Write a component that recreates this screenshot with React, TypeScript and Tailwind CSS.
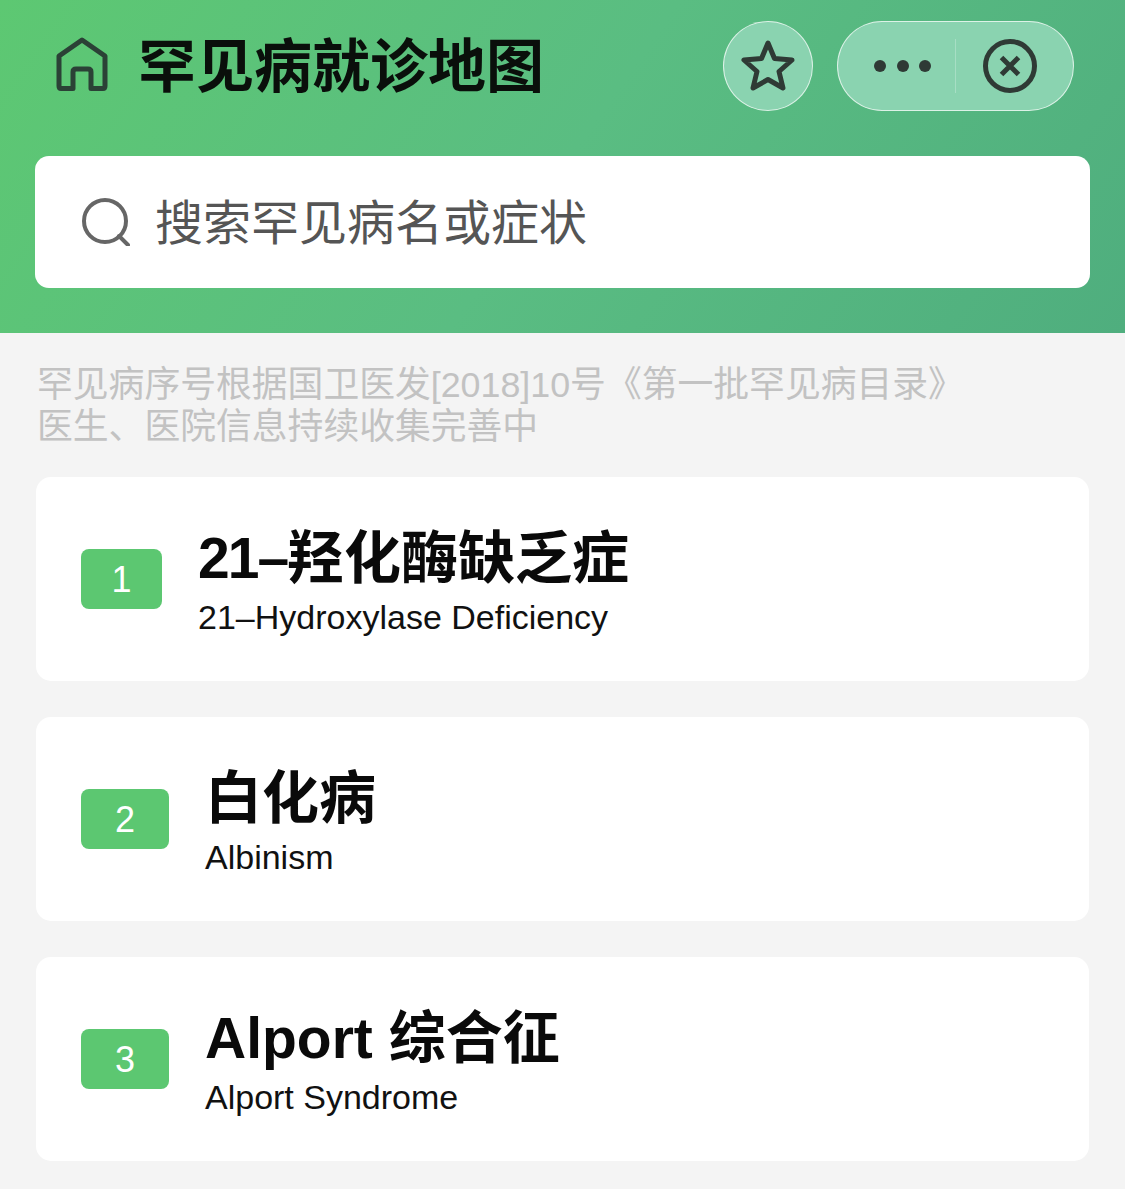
const fontStack = { fontFamily: '"Liberation Sans", "Noto Sans CJK SC", sans-serif' };

const diseases = [
  { no: 1, prefix: "21–", name: "羟化酶缺乏症", en: "21–Hydroxylase Deficiency", badge: "w-[81px]" },
  { no: 2, prefix: "", name: "白化病", en: "Albinism", badge: "w-[88px]" },
  { no: 3, prefix: "", name: "Alport 综合征", en: "Alport Syndrome", badge: "w-[88px]" },
];

function HomeIcon() {
  return (
    <svg width="52" height="54" viewBox="0 0 52 54" fill="none" stroke="#2b4136" strokeWidth="5" strokeLinejoin="round">
      <path d="M26 3 L49 19 V49 Q49 51.5 47 51.5 H35 V35 Q35 32 32 32 H20 Q17 32 17 35 V51.5 H5 Q3 51.5 3 49 V19 Z" />
    </svg>
  );
}

function StarIcon() {
  return (
    <svg width="54" height="52" viewBox="0 0 54 52" fill="none" stroke="#2f3a35" strokeWidth="5" strokeLinejoin="round">
      <path d="M27 3 L33.5 18.5 L51 20 L38 31.5 L42 48 L27 39.5 L12 48 L16 31.5 L3 20 L20.5 18.5 Z" />
    </svg>
  );
}

function CloseIcon() {
  return (
    <svg width="54" height="54" viewBox="0 0 54 54" fill="none" stroke="#2f3a35">
      <circle cx="27" cy="27" r="24.5" strokeWidth="5" />
      <path d="M18.5 18.5 L35.5 35.5 M35.5 18.5 L18.5 35.5" strokeWidth="5" />
    </svg>
  );
}

function SearchIcon() {
  return (
    <svg width="48" height="48" viewBox="0 0 48 48" fill="none" stroke="#666666" strokeWidth="4">
      <circle cx="23" cy="23" r="21" />
      <path d="M37 38 L46 47" strokeLinecap="round" />
    </svg>
  );
}

export default function App() {
  return (
    <div className="w-[1125px] h-[1189px] overflow-hidden bg-[#f4f4f4]" style={fontStack}>
      <div className="h-[333px] px-[35px] pt-[21px] bg-[linear-gradient(125deg,#5dc872_0%,#5abd82_50%,#4fae7e_100%)]">
        <div className="flex items-center h-[90px] pl-[21px] pr-[16px]">
          <div className="mb-[4px]">
            <HomeIcon />
          </div>
          <h1 className="ml-[30px] pt-[2px] text-[58px] leading-none font-bold text-[#0a0f0b]">罕见病就诊地图</h1>
          <div className="ml-auto flex items-center gap-[24px]">
            <div className="w-[90px] h-[90px] rounded-full bg-[#8ad3b0] border border-white/70 flex items-center justify-center">
              <StarIcon />
            </div>
            <div className="flex items-center w-[237px] h-[90px] rounded-full bg-[#8ad3b0] border border-white/70">
              <div className="w-[117px] flex justify-end gap-[10.5px] pr-[24px]">
                <span className="w-[12px] h-[12px] rounded-full bg-[#2f3a35]" />
                <span className="w-[12px] h-[12px] rounded-full bg-[#2f3a35]" />
                <span className="w-[12px] h-[12px] rounded-full bg-[#2f3a35]" />
              </div>
              <div className="w-px h-[54px] bg-white/25" />
              <div className="ml-[27px]">
                <CloseIcon />
              </div>
            </div>
          </div>
        </div>
        <div className="mt-[45px] h-[132px] rounded-[14px] bg-white flex items-center pl-[47px]">
          <SearchIcon />
          <span className="ml-[25px] pt-[4px] text-[48px] leading-none text-[#555555]">搜索罕见病名或症状</span>
        </div>
      </div>

      <p className="pt-[31px] pl-[37px] text-[35.8px] leading-[42px] text-[#c2c2c2]">
        罕见病序号根据国卫医发[2018]10号《第一批罕见病目录》
        <br />
        医生、医院信息持续收集完善中
      </p>

      <div className="mt-[29px] px-[36px] flex flex-col gap-[36px]">
        {diseases.map((d) => (
          <div key={d.no} className="h-[204px] rounded-[15px] bg-white flex items-center pl-[45px]">
            <div className={`${d.badge} h-[60px] pt-[2px] rounded-[8px] bg-[#5cc771] text-white text-[36px] flex items-center justify-center`}>
              {d.no}
            </div>
            <div className="ml-[36px] pt-[4px]">
              <div className="text-[57px] leading-[68px] font-bold text-[#0a0a0a]">
                <span className="tracking-[-2px]">{d.prefix}</span>
                {d.name}
              </div>
              <div className="mt-[4px] text-[34px] leading-[42px] text-[#111111]">{d.en}</div>
            </div>
          </div>
        ))}
      </div>
    </div>
  );
}
